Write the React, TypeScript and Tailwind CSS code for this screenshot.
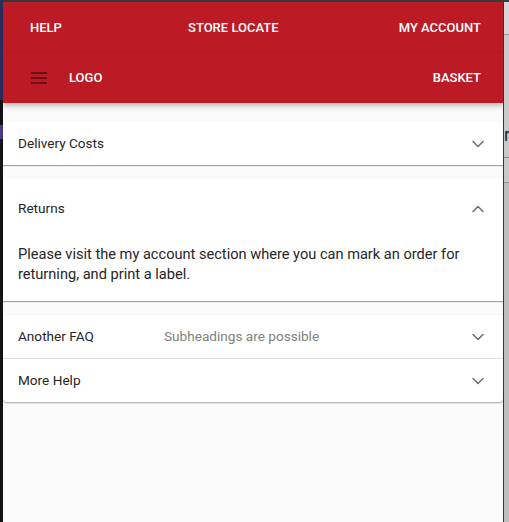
import { ChevronDown, ChevronUp } from "lucide-react";

function Panel({
  title,
  sub,
  expanded,
  children,
}: {
  title: string;
  sub?: string;
  expanded?: boolean;
  children?: React.ReactNode;
}) {
  return (
    <div>
      <div
        className={`flex items-center pl-[15px] pr-[15px] ${
          expanded ? "h-[59px]" : "h-[43px]"
        }`}
      >
        <span className={sub ? "w-[146px]" : "flex-1"}>{title}</span>
        {sub && <span className="flex-1 text-[#808080]">{sub}</span>}
        {expanded ? (
          <ChevronUp size={20} strokeWidth={1.9} className="text-[#707070]" />
        ) : (
          <ChevronDown size={20} strokeWidth={1.9} className="text-[#707070]" />
        )}
      </div>
      {children}
    </div>
  );
}

export default function App() {
  return (
    <div
      className="flex h-[522px] w-[509px] overflow-hidden bg-[#111]"
      style={{ fontFamily: "Roboto, 'Liberation Sans', sans-serif" }}
    >
      {/* window edge on the left */}
      <div className="flex w-[3px] flex-col">
        <div className="h-[100px] bg-[#2c2f5e]" />
        <div className="mt-[25px] h-[14px] bg-[#4b3a8a]" />
        <div className="flex-1 bg-[#141414]" />
      </div>

      <main className="flex w-[500px] flex-col bg-[#fafafa] text-[13.6px] text-[#262626]">
        <div className="h-[2px] bg-[#3a3a3a]" />
        <header className="bg-[#bc1b26] text-[13px] font-medium text-white shadow-[0_3px_5px_rgba(0,0,0,0.25)]">
          <nav className="flex h-[50px] items-center justify-between border-b border-[#b11822] pl-[27px] pr-[22px] pt-[2px]">
            <span>HELP</span>
            <span className="mr-[-6px]">STORE LOCATE</span>
            <span>MY ACCOUNT</span>
          </nav>
          <div className="flex h-[51px] items-center pl-[28px] pr-[22px] pt-[1px]">
            <div className="flex w-[16px] flex-col gap-[3px]">
              <span className="h-[2px] bg-[#6e1016]" />
              <span className="h-[2px] bg-[#6e1016]" />
              <span className="h-[2px] bg-[#6e1016]" />
            </div>
            <span className="ml-[22px] flex-1">LOGO</span>
            <span>BASKET</span>
          </div>
        </header>

        <section className="mt-[19px] flex flex-col gap-[14px]">
          <div className="bg-white shadow-[0_1px_1px_rgba(0,0,0,0.35)]">
            <Panel title="Delivery Costs" />
          </div>
          <div className="bg-white shadow-[0_1px_1px_rgba(0,0,0,0.35)]">
            <Panel title="Returns" expanded>
              <p className="px-[15px] pb-[17px] pr-[20px] pt-[6px] text-[14.6px] leading-[20px]">
                Please visit the my account section where you can mark an order
                for returning, and print a label.
              </p>
            </Panel>
          </div>
          <div className="divide-y divide-[#e0e0e0] rounded-b bg-white shadow-[0_1px_2px_rgba(0,0,0,0.35)]">
            <Panel title="Another FAQ" sub="Subheadings are possible" />
            <Panel title="More Help" />
          </div>
        </section>
      </main>

      {/* neighbouring window on the right */}
      <div className="flex w-[6px] flex-col border-l border-[#333] bg-[#c9c9c9]">
        <div className="h-[2px] bg-[#3a3a3a]" />
        <div className="h-[32px] bg-[#d6d6d6]" />
        <div className="h-[1px] bg-[#999]" />
        <div className="h-[90px]" />
        <div className="h-[20px] overflow-hidden">
          <div className="text-[18px] leading-[20px] text-[#222]">r</div>
        </div>
        <div className="mt-[12px] h-[1px] w-[5px] bg-[#888]" />
        <div className="mt-[24px] h-[1px] bg-[#999]" />
        <div className="flex-1 bg-[#bdbdbd]" />
      </div>
    </div>
  );
}
